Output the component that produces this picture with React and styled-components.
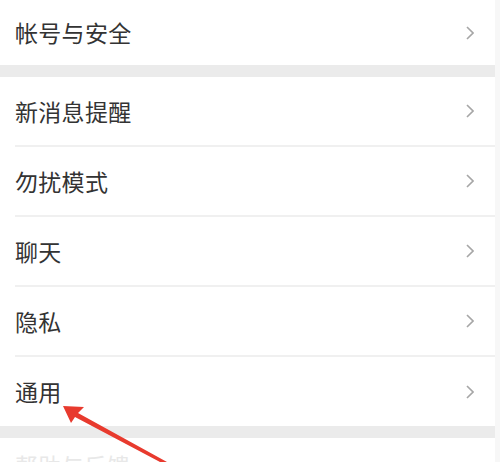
import React from "react";
import styled, { createGlobalStyle } from "styled-components";

const Global = createGlobalStyle`
  html, body { margin: 0; padding: 0; background: #ffffff; overflow: hidden; }
  body { font-family: "Noto Sans CJK SC", "Noto Sans", sans-serif; }
`;

const Page = styled.div`
  position: relative;
  width: 500px;
  height: 462px;
  overflow: hidden;
  display: flex;
  background: #ffffff;
`;

const List = styled.div`
  width: 495px;
  display: flex;
  flex-direction: column;
  background: #efefef;
  & > * { flex-shrink: 0; }
`;

const Strip = styled.div`
  width: 5px;
  background: #f7f7f7;
`;

const Group = styled.div`
  background: #ffffff;
  display: flex;
  flex-direction: column;
`;

const Gap = styled.div`
  height: 12px;
  background: #ebebeb;
`;

const Row = styled.div`
  height: ${(p) => p.$h}px;
  flex-shrink: 0;
  padding-left: 15px;
  display: flex;
  background: #ffffff;
`;

const RowInner = styled.div`
  flex: 1;
  display: flex;
  align-items: center;
  justify-content: space-between;
  padding-right: 21px;
  border-bottom: ${(p) => (p.$last ? "none" : "2px solid #f0f0f0")};
`;

const Label = styled.span`
  font-size: 23px;
  line-height: 1;
  color: #333333;
  letter-spacing: 0.3px;
`;

const FaintRow = styled.div`
  height: 40px;
  background: #ffffff;
  padding: 16px 0 0 15px;
  box-sizing: border-box;
`;

const FaintLabel = styled.span`
  display: block;
  font-size: 23px;
  line-height: 1;
  color: #e8e8e8;
`;

const Chevron = () => (
  <svg width="8" height="14" viewBox="0 0 8 14">
    <path d="M1 1 L7 7 L1 13" fill="none" stroke="#a6a6a6" strokeWidth="1.6" strokeLinejoin="miter" />
  </svg>
);

const ArrowLayer = styled.svg`
  position: absolute;
  left: 0;
  top: 0;
  pointer-events: none;
`;

const Item = ({ label, h = 70, last }) => (
  <Row $h={h}>
    <RowInner $last={last}>
      <Label>{label}</Label>
      <Chevron />
    </RowInner>
  </Row>
);

export default function App() {
  return (
    <>
      <Global />
      <Page>
        <List>
          <Group>
            <Item label="帐号与安全" h={65} last />
          </Group>
          <Gap />
          <Group>
            <Item label="新消息提醒" />
            <Item label="勿扰模式" />
            <Item label="聊天" />
            <Item label="隐私" />
            <Item label="通用" h={69} last />
          </Group>
          <Gap />
          <FaintRow>
            <FaintLabel>帮助与反馈</FaintLabel>
          </FaintRow>
        </List>
        <Strip />
        <ArrowLayer width="500" height="462" viewBox="0 0 500 462">
          <path d="M63 406 L84 407 L78 413 L167 462 L160 462 L75 417 L71 423 Z" fill="#e83a2e" />
        </ArrowLayer>
      </Page>
    </>
  );
}
